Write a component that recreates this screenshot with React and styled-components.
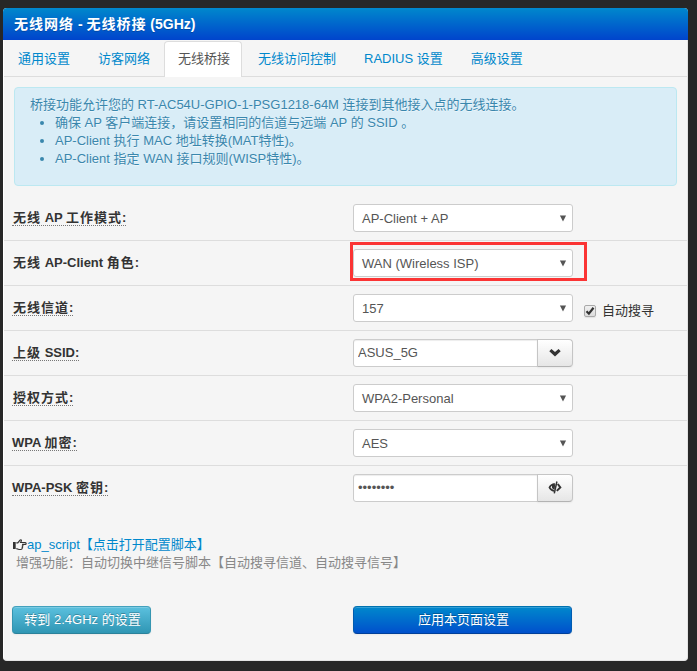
import React from 'react';
import styled, { createGlobalStyle, css } from 'styled-components';

const GlobalStyle = createGlobalStyle`
  *, *::before, *::after { box-sizing: border-box; }
  body {
    margin: 0;
    background: #272727;
    color: #333;
    font: 13px/18px "Liberation Sans", "Noto Sans CJK SC", sans-serif;
  }
`;

const Page = styled.main`
  height: 671px;
  padding: 8px 9px 10px 3px;
  overflow: hidden;
`;

const Panel = styled.section`
  height: 653px;
  background: #f5f5f5;
  border: 1px solid #e3e3e3;
  border-top: 0;
  border-left-color: #fff;
  border-radius: 4px;
`;

const Header = styled.h1`
  margin: 0 -1px;
  height: 32px;
  padding-left: 11px;
  border-radius: 4px 4px 0 0;
  background: linear-gradient(#0088cc, #0044cc);
  color: #fff;
  font-size: 14px;
  line-height: 32px;
  text-shadow: 0 1px 0 rgba(0, 0, 0, 0.2);
  white-space: nowrap;
`;

const Wide = styled.span`
  letter-spacing: 1px;
`;

const Tabs = styled.nav`
  display: flex;
  gap: 2px;
  height: 37px;
  padding-top: 1px;
  border-bottom: 1px solid #ddd;
`;

const Tab = styled.a`
  height: 36px;
  padding: 0 11px 0 13px;
  border: 1px solid transparent;
  border-bottom: 0;
  border-radius: 4px 4px 0 0;
  color: #0088cc;
  line-height: 33px;
  white-space: nowrap;
  ${({ $active }) => $active && css`
    background: #fff;
    border-color: #ddd;
    color: #555;
  `}
`;

const Alert = styled.div`
  width: 663px;
  height: 99px;
  margin: 10px 0 9px 10px;
  padding: 8px 15px;
  border: 1px solid #bce8f1;
  border-radius: 4px;
  background: #d9edf7;
  color: #3a87ad;
  text-shadow: 0 1px 0 rgba(255, 255, 255, 0.5);
  white-space: nowrap;
`;

const AlertList = styled.ul`
  margin: 0;
  padding-left: 25px;
`;

const Row = styled.div`
  display: grid;
  grid-template-columns: 341px auto 1fr;
  height: 45px;
  padding: 8px 0 8px 8px;
  border-top: 1px solid ${({ $first }) => ($first ? 'transparent' : '#ddd')};
`;

const Label = styled.div`
  height: 22px;
  padding-top: 3px;
  font-weight: bold;
  line-height: 21px;
  white-space: nowrap;
`;

const LabelText = styled.span`
  display: inline-block;
  height: 19px;
  padding-left: ${({ $inset }) => ($inset ? 1 : 0)}px;
  border-bottom: ${({ $hint }) => ($hint ? '1px dotted #777' : '0')};
`;

const Field = styled.div`
  display: flex;
  width: 220px;
  height: 28px;
`;

const Select = styled.div`
  display: flex;
  align-items: center;
  justify-content: space-between;
  width: 220px;
  height: 28px;
  padding: 1px 5px 0 8px;
  border: 1px solid #ccc;
  border-radius: 3px;
  background: #fff;
  color: #555;
  line-height: 19px;
`;

const Input = styled.input`
  width: 185px;
  height: 28px;
  padding: 0 4px 1px;
  border: 1px solid #ccc;
  border-radius: 3px 0 0 3px;
  outline: 0;
  background: #fff;
  box-shadow: inset 0 1px 1px rgba(0, 0, 0, 0.075);
  color: #555;
  font: 13px/18px "Liberation Sans", sans-serif;
`;

const AddonButton = styled.button`
  display: flex;
  align-items: center;
  justify-content: center;
  width: 36px;
  height: 28px;
  margin-left: -1px;
  padding: 0 1px 1px 0;
  border: 1px solid #c5c5c5;
  border-bottom-color: #b3b3b3;
  border-radius: 0 4px 4px 0;
  background: linear-gradient(#fff, #e6e6e6);
  box-shadow: inset 0 1px 0 rgba(255, 255, 255, 0.2), 0 1px 2px rgba(0, 0, 0, 0.05);
`;

const Highlight = styled.div`
  position: absolute;
  left: -3px;
  top: -7px;
  width: 237px;
  height: 39px;
  border: 3px solid #fb3434;
`;

const Anchor = styled.div`
  position: relative;
`;

const CheckLabel = styled.div`
  display: flex;
  align-items: center;
  gap: 6px;
  height: 20px;
  margin: 7px 0 0 11px;
`;

const CheckBox = styled.span`
  display: flex;
  width: 12px;
  height: 12px;
  border: 1px solid #a9a9a9;
  border-radius: 2px;
  background: linear-gradient(#f0f0f0, #dcdcdc);
  box-shadow: 0 1px 1px rgba(0, 0, 0, 0.08);
`;

const Script = styled.div`
  display: flex;
  align-items: center;
  height: 18px;
  margin: 26px 0 0 9px;
  white-space: nowrap;
`;

const Link = styled.a`
  color: #0088cc;
`;

const Note = styled.div`
  margin-left: 12px;
  height: 18px;
  color: #888;
  white-space: nowrap;
`;

const Actions = styled.div`
  display: grid;
  grid-template-columns: 341px auto;
  justify-content: start;
  margin: 34px 0 0 8px;
`;

const Button = styled.button`
  width: ${({ $primary }) => ($primary ? 219 : 139)}px;
  height: 28px;
  padding: 0 0 1px 2px;
  border: 1px solid;
  border-color: ${({ $primary }) => ($primary ? '#0072b0 #005cb0 #003f99' : '#43a1bd #3595b1 #2a819a')};
  border-radius: 4px;
  background: ${({ $primary }) => ($primary ? 'linear-gradient(#0088cc, #0050cc)' : 'linear-gradient(#5bc0de, #2f96b4)')};
  box-shadow: inset 0 1px 0 rgba(255, 255, 255, 0.2), 0 1px 2px rgba(0, 0, 0, 0.05);
  color: #fff;
  font: 13px/18px "Liberation Sans", "Noto Sans CJK SC", sans-serif;
  text-shadow: 0 -1px 0 rgba(0, 0, 0, 0.25);
  white-space: nowrap;
`;

// Bold Chinese runs carry one extra pixel per character.
const BoldText = ({ children }) =>
  children.split(/([\u4e00-\u9fff]+)/).map((part, i) => (i % 2 ? <Wide key={i}>{part}</Wide> : part));

const Arrow = () => (
  <svg width="8" height="8" viewBox="0 0 8 8">
    <path d="M.9 .6h6.2L4 6.6z" fill="#555" />
  </svg>
);

const ChevronIcon = () => (
  <svg width="12" height="9" viewBox="0 0 12 9">
    <path d="M.3 3.2 2.4.9 6 3.9 9.6.9l2.1 2.3L6 8.6z" fill="#333" />
  </svg>
);

const EyeIcon = () => (
  <svg width="14" height="13" viewBox="0 0 14 13">
    <path d="M6.8 2C3.8 2.2 1.6 4.2.5 6.4c1 2.1 2.9 3.8 5.4 4.3L6.4 9C4.8 8.7 3.4 7.8 2.5 6.5c.3-.6.8-1.3 1.5-1.8-.3 2.3.5 3.4 2.5 3.8z" fill="#333" />
    <path d="M4.2 4.2 7.4 3 6.2 8.4C4.3 7.7 3.7 6.2 4.2 4.2z" fill="#333" />
    <path d="M8.9.5 6.3 12.3" stroke="#333" strokeWidth="1.5" />
    <path d="m9.8 3 2.5 3.4-3.5 3.5" fill="none" stroke="#333" strokeWidth="2" />
  </svg>
);

const HandIcon = () => (
  <svg width="14" height="12" viewBox="0 0 14 12">
    <path d="M0 3h2.7v7H0z" fill="#333" />
    <path d="M3.3 3.8h1.5L7 1.1c1-.9 1.8.2 1.2 1.2l-.6 1.2h4.7c1.1 0 1.1 1.8 0 1.8H9.2c1 .4.9 1.4.2 1.8.5.5.4 1.3-.3 1.7.2.9-.3 1.7-1.3 1.7H6c-1.2 0-1.6-.8-2.7-.8" fill="none" stroke="#333" strokeWidth="1.2" />
  </svg>
);

const CheckIcon = () => (
  <svg width="10" height="10" viewBox="0 0 10 10">
    <path d="M1.5 5.3 3.9 7.7 8.5 1.8" fill="none" stroke="#333" strokeWidth="2.2" />
  </svg>
);

const tabs = ['通用设置', '访客网络', '无线桥接', '无线访问控制', 'RADIUS 设置', '高级设置'];

const rows = [
  { label: '无线 AP 工作模式:', hint: true, value: 'AP-Client + AP' },
  { label: '无线 AP-Client 角色:', value: 'WAN (Wireless ISP)', highlight: true },
  { label: '无线信道:', hint: true, value: '157', auto: true },
  { label: '上级 SSID:', hint: true, value: 'ASUS_5G', icon: <ChevronIcon /> },
  { label: '授权方式:', hint: true, value: 'WPA2-Personal' },
  { label: 'WPA 加密:', hint: true, value: 'AES' },
  { label: 'WPA-PSK 密钥:', hint: true, value: '••••••••', icon: <EyeIcon /> },
];

export default function App() {
  return (
    <Page>
      <GlobalStyle />
      <Panel>
        <Header><BoldText>无线网络 - 无线桥接 (5GHz)</BoldText></Header>
        <Tabs>
          {tabs.map((name, i) => <Tab key={name} $active={i === 2}>{name}</Tab>)}
        </Tabs>
        <Alert>
          桥接功能允许您的 RT-AC54U-GPIO-1-PSG1218-64M 连接到其他接入点的无线连接。
          <AlertList>
            <li>确保 AP 客户端连接，请设置相同的信道与远端 AP 的 SSID 。</li>
            <li>AP-Client 执行 MAC 地址转换(MAT特性)。</li>
            <li>AP-Client 指定 WAN 接口规则(WISP特性)。</li>
          </AlertList>
        </Alert>
        {rows.map((row, i) => (
          <Row key={row.label} $first={i === 0}>
            <Label>
              <LabelText $hint={row.hint} $inset={!row.label.startsWith('W')}>
                <BoldText>{row.label}</BoldText>
              </LabelText>
            </Label>
            <Anchor>
              {row.icon ? (
                <Field>
                  <Input defaultValue={row.value} />
                  <AddonButton>{row.icon}</AddonButton>
                </Field>
              ) : (
                <Select>{row.value}<Arrow /></Select>
              )}
              {row.highlight && <Highlight />}
            </Anchor>
            {row.auto && <CheckLabel><CheckBox><CheckIcon /></CheckBox>自动搜寻</CheckLabel>}
          </Row>
        ))}
        <Script><HandIcon /><Link>ap_script【点击打开配置脚本】</Link></Script>
        <Note>增强功能：自动切换中继信号脚本【自动搜寻信道、自动搜寻信号】</Note>
        <Actions>
          <Button>转到 2.4GHz 的设置</Button>
          <Button $primary>应用本页面设置</Button>
        </Actions>
      </Panel>
    </Page>
  );
}
